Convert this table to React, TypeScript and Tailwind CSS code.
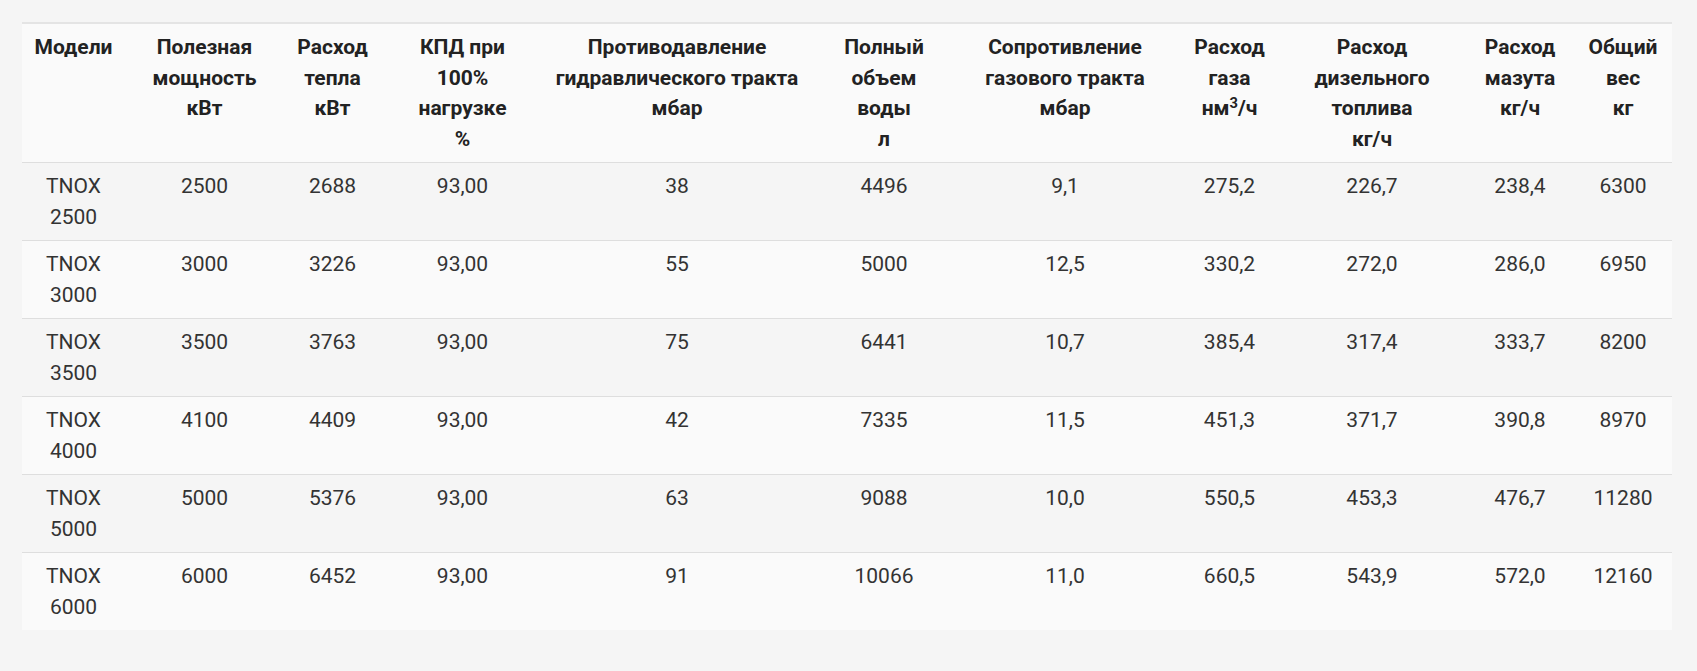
import React from "react";

const headers: React.ReactNode[][] = [
  ["Модели"],
  ["Полезная", "мощность", "кВт"],
  ["Расход", "тепла", "кВт"],
  ["КПД при", "100%", "нагрузке", "%"],
  ["Противодавление", "гидравлического тракта", "мбар"],
  ["Полный", "объем", "воды", "л"],
  ["Сопротивление", "газового тракта", "мбар"],
  [
    "Расход",
    "газа",
    <span key="u">
      нм<sup className="text-[0.7em]">3</sup>/ч
    </span>,
  ],
  ["Расход", "дизельного", "топлива", "кг/ч"],
  ["Расход", "мазута", "кг/ч"],
  ["Общий", "вес", "кг"],
];

const widths = [103, 159, 97, 163, 266, 148, 214, 115, 170, 126, 89];

const rows: string[][] = [
  ["2500", "2500", "2688", "93,00", "38", "4496", "9,1", "275,2", "226,7", "238,4", "6300"],
  ["3000", "3000", "3226", "93,00", "55", "5000", "12,5", "330,2", "272,0", "286,0", "6950"],
  ["3500", "3500", "3763", "93,00", "75", "6441", "10,7", "385,4", "317,4", "333,7", "8200"],
  ["4000", "4100", "4409", "93,00", "42", "7335", "11,5", "451,3", "371,7", "390,8", "8970"],
  ["5000", "5000", "5376", "93,00", "63", "9088", "10,0", "550,5", "453,3", "476,7", "11280"],
  ["6000", "6000", "6452", "93,00", "91", "10066", "11,0", "660,5", "543,9", "572,0", "12160"],
];

export default function App() {
  return (
    <div
      className="w-full min-h-[671px] bg-[#f5f5f5] pt-[22px] pl-[22px]"
      style={{ fontFamily: "Roboto, 'Noto Sans', Arial, sans-serif" }}
    >
      <table className="w-[1650px] table-fixed border-t-2 border-[#e4e4e4] text-[21px] leading-[30.5px]">
        <colgroup>
          {widths.map((w, i) => (
            <col key={i} style={{ width: w }} />
          ))}
        </colgroup>
        <thead>
          <tr className="bg-[#fafafa] border-b border-[#dedede]">
            {headers.map((lines, i) => (
              <th
                key={i}
                className={
                  "pl-0 pt-2 pb-2 align-top text-center font-bold text-[#222222] whitespace-nowrap " +
                  (i === 10 ? "pr-[9px]" : "pr-0")
                }
              >
                {lines.map((l, j) => (
                  <div key={j}>{l}</div>
                ))}
              </th>
            ))}
          </tr>
        </thead>
        <tbody>
          {rows.map((r, i) => (
            <tr
              key={i}
              className={
                (i % 2 === 0 ? "bg-[#f5f5f5]" : "bg-[#fafafa]") +
                (i < rows.length - 1 ? " border-b border-[#dedede]" : "")
              }
            >
              {r.map((v, j) => (
                <td
                  key={j}
                  className={
                    "pl-0 pt-2 pb-2 align-top text-center text-[#333333] whitespace-nowrap " +
                    (j === 10 ? "pr-[9px]" : "pr-0")
                  }
                >
                  {j === 0 ? (
                    <>
                      <div>TNOX</div>
                      <div>{v}</div>
                    </>
                  ) : (
                    <div>{v}</div>
                  )}
                </td>
              ))}
            </tr>
          ))}
        </tbody>
      </table>
    </div>
  );
}
